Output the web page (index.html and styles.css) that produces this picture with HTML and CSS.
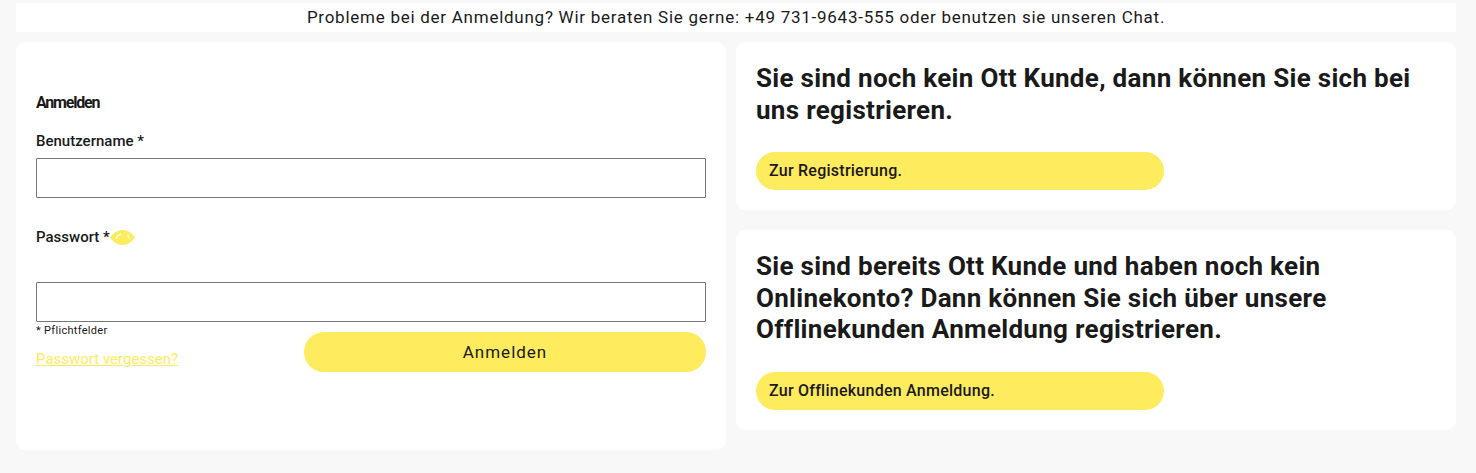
FILE: index.html
```html
<!DOCTYPE html>
<html lang="de">
<head>
    <meta charset="UTF-8">
    <meta name="viewport" content="width=device-width, initial-scale=1.0">
    <title>Anmelden</title>
    <link rel="stylesheet" href="styles.css">
</head>
<body>

<div class="container">
    <p class="hint">Probleme bei der Anmeldung? Wir beraten Sie gerne: +49 731-9643-555 oder benutzen sie unseren Chat.</p>

    <div class="columns">
        <form class="card login">
            <h2>Anmelden</h2>

            <label for="username">Benutzername *</label>
            <input type="text" id="username" name="username">

            <div class="password-label">
                <label for="password">Passwort *</label>
                <svg class="eye" width="25" height="15" viewBox="0 0 25 15" aria-hidden="true">
                    <path d="M0 7.500C3 3 7.500 0 12.500 0S22 3 25 7.500C22 12 17.500 15 12.500 15S3 12 0 7.500Z" fill="#ffeb5e"/>
                    <path d="M6.500 9C6.500 6.500 8.500 4.500 11 4.300" fill="none" stroke="#fff" stroke-width="1.400"/>
                    <path d="M17.500 4.800C18.500 5.800 19 7 19 8.500" fill="none" stroke="#fff" stroke-width="1.400"/>
                </svg>
            </div>
            <input type="password" id="password" name="password">

            <small class="required">* Pflichtfelder</small>

            <div class="login-actions">
                <a href="#" class="forgot">Passwort vergessen?</a>
                <button type="submit">Anmelden</button>
            </div>
        </form>

        <div class="side">
            <div class="card teaser">
                <h3>Sie sind noch kein Ott Kunde, dann können Sie sich bei uns registrieren.</h3>
                <a href="#" class="pill">Zur Registrierung.</a>
            </div>
            <div class="card teaser">
                <h3>Sie sind bereits Ott Kunde und haben noch kein Onlinekonto? Dann können Sie sich über unsere Offlinekunden Anmeldung registrieren.</h3>
                <a href="#" class="pill">Zur Offlinekunden Anmeldung.</a>
            </div>
        </div>
    </div>
</div>

</body>
</html>
```

FILE: styles.css
```css
body {
    font-family: "Roboto", "Liberation Sans", sans-serif;
    background-color: #f8f8f8;
    color: #1a1a1a;
    margin: 0;
    padding: 0;
}

.container {
    padding: 3px 20px 23px 16px;
}

.hint {
    background-color: #fff;
    margin: 0 0 10px;
    height: 29px;
    line-height: 29px;
    text-align: center;
    font-size: 17px;
    letter-spacing: 0.74px;
}

.columns {
    display: grid;
    grid-template-columns: 710px 720px;
    gap: 10px;
    align-items: start;
}

.card {
    background-color: #fff;
    border-radius: 10px;
}

.login {
    height: 408px;
    padding: 52px 20px 0;
    box-sizing: border-box;
}

.login h2 {
    margin: 0 0 20px;
    font-size: 16px;
    line-height: 18px;
    font-weight: 700;
    letter-spacing: -1.200px;
}

label {
    display: block;
    font-size: 15px;
    line-height: 18px;
    font-weight: 500;
}

input {
    display: block;
    width: 100%;
    height: 40px;
    box-sizing: border-box;
    border: 1px solid #767676;
    border-radius: 1px;
    margin: 8px 0 0;
    padding: 0 8px;
    background-color: #fff;
}

.password-label {
    display: flex;
    align-items: center;
    margin-top: 30px;
}

.password-label + input {
    margin-top: 36px;
}

.eye {
    display: block;
}

.required {
    display: block;
    font-size: 11px;
    line-height: 16px;
    letter-spacing: 0.3px;
    padding-top: 1px;
}

.login-actions {
    display: flex;
    justify-content: space-between;
    align-items: flex-start;
    margin-top: -7px;
}

.forgot {
    color: #ffeb5e;
    font-size: 15px;
    line-height: 18px;
    margin-top: 18px;
}

button {
    width: 402px;
    height: 40px;
    border: none;
    border-radius: 20px;
    background-color: #ffeb5e;
    color: #1a1a1a;
    font-family: inherit;
    font-size: 17px;
    letter-spacing: 1px;
    cursor: pointer;
}

.side {
    display: flex;
    flex-direction: column;
    gap: 20px;
}

.teaser {
    padding: 21px 20px 20px;
}

.teaser h3 {
    margin: 0 0 26px;
    font-size: 26px;
    line-height: 31.500px;
    font-weight: 700;
    letter-spacing: 0.3px;
}

.pill {
    display: block;
    width: 408px;
    height: 38px;
    line-height: 38px;
    box-sizing: border-box;
    padding-left: 13px;
    border-radius: 19px;
    background-color: #ffeb5e;
    color: #1a1a1a;
    font-size: 16px;
    font-weight: 500;
    letter-spacing: 0.25px;
    text-decoration: none;
}
```
